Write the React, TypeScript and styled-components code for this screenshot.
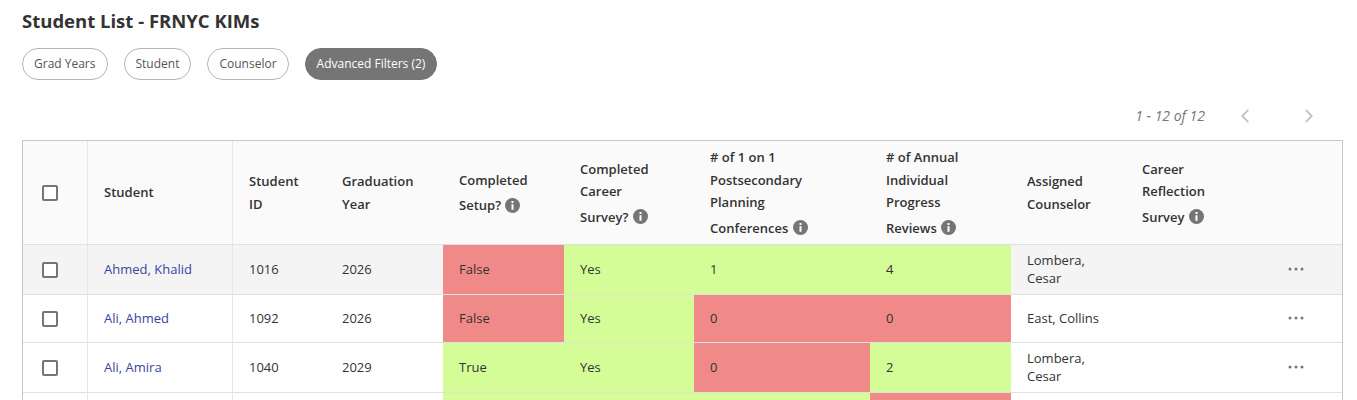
import React from "react";
import styled, { createGlobalStyle } from "styled-components";
import { ChevronLeft, ChevronRight } from "lucide-react";

const GlobalStyle = createGlobalStyle`
  html, body {
    margin: 0;
    height: 400px;
    overflow: hidden;
    background: #fff;
    font-family: "Open Sans", "Liberation Sans", sans-serif;
    color: #333;
  }
`;

const Page = styled.div`
  padding: 9px 14px 0 22px;
`;

const Title = styled.h1`
  margin: 0;
  font-size: 18.5px;
  line-height: 24px;
  font-weight: 700;
  color: #333;
`;

const Filters = styled.div`
  display: flex;
  gap: 16px;
  margin-top: 15px;
`;

const Chip = styled.button<{ $active?: boolean }>`
  box-sizing: border-box;
  height: 32px;
  padding: 0 11px 1px;
  border-radius: 16px;
  border: 1px solid ${(p) => (p.$active ? "#757575" : "#b5b5b5")};
  background: ${(p) => (p.$active ? "#757575" : "#fff")};
  color: ${(p) => (p.$active ? "#fff" : "#555")};
  font-family: inherit;
  font-size: 12px;
`;

const Pager = styled.div`
  display: flex;
  align-items: center;
  justify-content: flex-end;
  height: 24px;
  margin-top: 23px;
  padding-right: 23px;
  color: #757575;
`;

const PagerText = styled.span`
  font-size: 14px;
  font-style: italic;
  margin-right: 29px;
`;

const PagerButton = styled.span`
  display: flex;
  margin-top: 2px;
  color: #c4c4c4;
  & + & {
    margin-left: 42px;
  }
`;

const TableFrame = styled.div`
  margin-top: 13px;
  border: 1px solid #c6c6c6;
  border-bottom: 0;
`;

const Table = styled.table`
  width: 100%;
  table-layout: fixed;
  border-collapse: separate;
  border-spacing: 0;
  font-size: 13px;
`;

const Head = styled.th<{ $w: number; $divider?: boolean }>`
  box-sizing: border-box;
  width: ${(p) => p.$w}px;
  height: 104px;
  padding: 5px 16px;
  background: #fafafa;
  border-bottom: 1px solid #e0e0e0;
  border-right: ${(p) => (p.$divider ? "1px solid #e6e6e6" : "0")};
  text-align: left;
  font-weight: 600;
  line-height: 22.5px;
  color: #333;
`;

const Row = styled.tr<{ $hover?: boolean }>`
  background: ${(p) => (p.$hover ? "#f4f4f4" : "#fff")};
`;

const Cell = styled.td<{ $tone?: "good" | "bad"; $divider?: boolean }>`
  box-sizing: border-box;
  height: 48px;
  padding: 6px 16px 7px;
  line-height: 18px;
  border-bottom: 1px solid #e0e0e0;
  border-right: ${(p) => (p.$divider ? "1px solid #e6e6e6" : "0")};
  background: ${(p) =>
    p.$tone === "good" ? "#d5fd97" : p.$tone === "bad" ? "#f08a88" : "transparent"};
  color: #333;
`;

const CheckCell = styled(Cell)`
  padding: 0 0 0 19px;
`;

const HeadCheckCell = styled(Head)`
  padding: 0 0 0 19px;
`;

const Checkbox = styled.span`
  display: block;
  box-sizing: border-box;
  width: 16px;
  height: 16px;
  border: 2px solid #757575;
  border-radius: 2px;
  background: #fff;
`;

const StudentLink = styled.a`
  color: #3a44a0;
  text-decoration: none;
`;

const InfoBadge = styled.svg`
  width: 15px;
  height: 15px;
  margin: 6.5px 0 0 1px;
  vertical-align: -3px;
`;

const Dots = styled.svg`
  display: block;
  width: 16px;
  height: 4px;
`;

const Info = () => (
  <InfoBadge viewBox="0 0 15 15">
    <circle cx="7.5" cy="7.5" r="7.5" fill="#757575" />
    <rect x="6.5" y="3" width="2" height="2" fill="#fff" />
    <rect x="6.5" y="6.2" width="2" height="5.6" fill="#fff" />
  </InfoBadge>
);

type Tone = "good" | "bad";

type Student = {
  name: string;
  id: string;
  year: string;
  setup: [string, Tone];
  career: [string, Tone];
  conferences: [string, Tone];
  reviews: [string, Tone];
  counselor: string;
  hover?: boolean;
};

const students: Student[] = [
  {
    name: "Ahmed, Khalid",
    id: "1016",
    year: "2026",
    setup: ["False", "bad"],
    career: ["Yes", "good"],
    conferences: ["1", "good"],
    reviews: ["4", "good"],
    counselor: "Lombera, Cesar",
    hover: true,
  },
  {
    name: "Ali, Ahmed",
    id: "1092",
    year: "2026",
    setup: ["False", "bad"],
    career: ["Yes", "good"],
    conferences: ["0", "bad"],
    reviews: ["0", "bad"],
    counselor: "East, Collins",
  },
  {
    name: "Ali, Amira",
    id: "1040",
    year: "2029",
    setup: ["True", "good"],
    career: ["Yes", "good"],
    conferences: ["0", "bad"],
    reviews: ["2", "good"],
    counselor: "Lombera, Cesar",
  },
  {
    name: "",
    id: "",
    year: "",
    setup: ["", "good"],
    career: ["", "good"],
    conferences: ["", "good"],
    reviews: ["", "bad"],
    counselor: "",
  },
];

export default function App() {
  return (
    <Page>
      <GlobalStyle />
      <Title>Student List - FRNYC KIMs</Title>
      <Filters>
        <Chip>Grad Years</Chip>
        <Chip>Student</Chip>
        <Chip>Counselor</Chip>
        <Chip $active>Advanced Filters (2)</Chip>
      </Filters>
      <Pager>
        <PagerText>1 - 12 of 12</PagerText>
        <PagerButton>
          <ChevronLeft size={22} />
        </PagerButton>
        <PagerButton>
          <ChevronRight size={22} />
        </PagerButton>
      </Pager>
      <TableFrame>
        <Table>
          <thead>
            <tr>
              <HeadCheckCell $w={65} $divider>
                <Checkbox />
              </HeadCheckCell>
              <Head $w={145} $divider>Student</Head>
              <Head $w={93}>Student ID</Head>
              <Head $w={117}>Graduation Year</Head>
              <Head $w={121}>
                Completed<br />Setup? <Info />
              </Head>
              <Head $w={130}>
                Completed<br />Career<br />Survey? <Info />
              </Head>
              <Head $w={176}>
                # of 1 on 1<br />Postsecondary<br />Planning<br />Conferences <Info />
              </Head>
              <Head $w={141}>
                # of Annual<br />Individual<br />Progress<br />Reviews <Info />
              </Head>
              <Head $w={115}>Assigned Counselor</Head>
              <Head $w={146}>
                Career<br />Reflection<br />Survey <Info />
              </Head>
              <Head $w={70} />
            </tr>
          </thead>
          <tbody>
            {students.map((s, i) => (
              <Row key={i} $hover={s.hover}>
                <CheckCell $divider>
                  <Checkbox />
                </CheckCell>
                <Cell $divider>
                  <StudentLink>{s.name}</StudentLink>
                </Cell>
                <Cell>{s.id}</Cell>
                <Cell>{s.year}</Cell>
                <Cell $tone={s.setup[1]}>{s.setup[0]}</Cell>
                <Cell $tone={s.career[1]}>{s.career[0]}</Cell>
                <Cell $tone={s.conferences[1]}>{s.conferences[0]}</Cell>
                <Cell $tone={s.reviews[1]}>{s.reviews[0]}</Cell>
                <Cell>{s.counselor}</Cell>
                <Cell />
                <Cell>
                  <Dots viewBox="0 0 16 4">
                    <circle cx="2" cy="2" r="1.5" fill="#757575" />
                    <circle cx="8" cy="2" r="1.5" fill="#757575" />
                    <circle cx="14" cy="2" r="1.5" fill="#757575" />
                  </Dots>
                </Cell>
              </Row>
            ))}
          </tbody>
        </Table>
      </TableFrame>
    </Page>
  );
}
